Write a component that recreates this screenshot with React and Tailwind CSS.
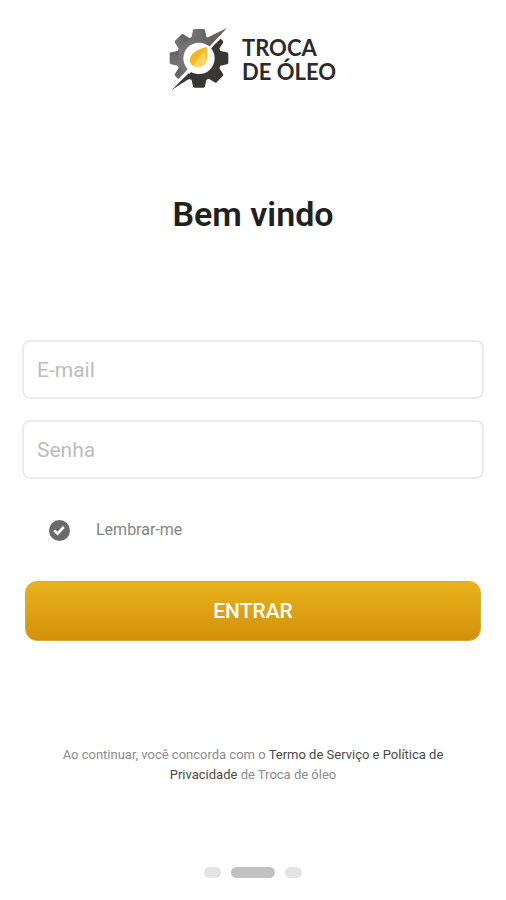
import { useState } from 'react'

const TEETH = [0, 45, 90, 135, 180, 225, 270, 315]

const Gear = ({ fill }) => (
  <g fill={fill}>
    <circle cx="117" cy="115" r="68" />
    {TEETH.map(deg => (
      <path
        key={deg}
        d="M94 54 L99 31 Q100 27 104 27 H130 Q134 27 135 31 L140 54 Z"
        transform={`rotate(${deg} 117 115)`}
      />
    ))}
  </g>
)

const LogoMark = () => (
  <svg viewBox="0 0 240 240" className="size-20 shrink-0" aria-hidden="true">
    <defs>
      <linearGradient id="drop" x1="0" y1="0" x2="1" y2="1">
        <stop offset="0" stopColor="#f7a90c" />
        <stop offset="1" stopColor="#fcc93a" />
      </linearGradient>
      <linearGradient id="steel" x1="0" y1="0" x2="1" y2="0">
        <stop offset="0" stopColor="#787878" />
        <stop offset="1" stopColor="#606060" />
      </linearGradient>
      <clipPath id="upper"><path d="M0 0 H200 V25 L152 72 L70 162 L35 196 L0 240 Z" /></clipPath>
      <clipPath id="lower"><path d="M240 240 H35 V210 L88 162 L162 76 L200 38 L240 0 Z" /></clipPath>
    </defs>
    <g clipPath="url(#upper)"><Gear fill="url(#steel)" /></g>
    <g clipPath="url(#lower)"><Gear fill="#383736" /></g>
    <path d="M132 58 L201 24 L148 80 Z" fill="#636363" />
    <path d="M34 211 L86 160 L108 178 L84 178 Z" fill="#383736" />
    <circle cx="117" cy="115" r="47" fill="#fff" />
    <path d="M139 80 C146 100 143 124 130 136 C117 147 95 141 90 126 C86 103 109 90 139 80 Z" fill="url(#drop)" />
    <path d="M133 92 C124 108 108 118 101 140 C113 146 128 141 134 128 C140 116 136 104 133 92 Z" fill="#fdd45c" />
  </svg>
)

const Field = ({ label, type, value, onChange }) => (
  <input
    type={type}
    value={value}
    onChange={e => onChange(e.target.value)}
    placeholder={label}
    aria-label={label}
    className="block h-[59px] w-full rounded-lg border-2 border-[#ebebeb] bg-white px-[13px] text-[21px] text-[#222] placeholder:text-[#bdbdbd] outline-none focus:border-[#dfa414]"
  />
)

export default function App() {
  const [email, setEmail]       = useState('')
  const [password, setPassword] = useState('')
  const [remember, setRemember] = useState(true)

  return (
    <main className="flex min-h-screen flex-col bg-white px-[22px] pt-5 pb-[22px] font-[Roboto,sans-serif]">
      <header className="flex items-center justify-center gap-0.5 pr-2.5">
        <LogoMark />
        <p className="flex flex-col font-[Lato,sans-serif] text-[22px] leading-6 font-bold text-[#2b2b2b]">
          <span>TROCA</span>
          <span>DE ÓLEO</span>
        </p>
      </header>

      <h1 className="mt-[94px] text-center text-[34px] leading-10 font-semibold text-[#20201e]">Bem vindo</h1>

      <form className="mt-[106px]" onSubmit={e => e.preventDefault()}>
        <div className="flex flex-col gap-[21px]">
          <Field label="E-mail" type="email" value={email} onChange={setEmail} />
          <Field label="Senha" type="password" value={password} onChange={setPassword} />
        </div>

        <label className="mt-[39px] ml-[26px] flex w-fit items-center gap-[26px] text-base text-[#858585]">
          <span className="grid size-[22px] place-items-center">
            <input
              type="checkbox"
              checked={remember}
              onChange={e => setRemember(e.target.checked)}
              className="col-start-1 row-start-1 size-[21px] appearance-none rounded-full border-2 border-[#6b6b6b] checked:bg-[#6b6b6b]"
            />
            {remember && (
              <svg viewBox="0 0 22 22" className="pointer-events-none col-start-1 row-start-1 size-[22px]" aria-hidden="true">
                <path d="M6.2 11.4 L9.6 14.6 L15.8 8" fill="none" stroke="#fff" strokeWidth="2.6" />
              </svg>
            )}
          </span>
          Lembrar-me
        </label>

        <div className="mt-[39px] px-[3px]">
          <button
            type="submit"
            className="flex h-[60px] w-full items-center justify-center rounded-xl border border-[#dfa83a] bg-linear-to-b from-[#e8b31c] to-[#d3900a] text-[21px] leading-8 font-medium text-white"
          >
            ENTRAR
          </button>
        </div>
      </form>

      <p className="mx-auto mt-[104px] max-w-[410px] text-center text-[13px] leading-5 text-[#8c8c8c]">
        Ao continuar, você concorda com o{' '}
        <a href="#termos" className="text-[#4a4a4a]">Termo de Serviço e Política de Privacidade</a>
        {' '}de Troca de óleo
      </p>

      <div className="mt-auto flex justify-center gap-2.5">
        <span className="h-[11px] w-[17px] rounded-full bg-[#e4e4e4]" />
        <span className="h-[11px] w-11 rounded-full bg-[#c2c2c2]" />
        <span className="h-[11px] w-[17px] rounded-full bg-[#e4e4e4]" />
      </div>
    </main>
  )
}
